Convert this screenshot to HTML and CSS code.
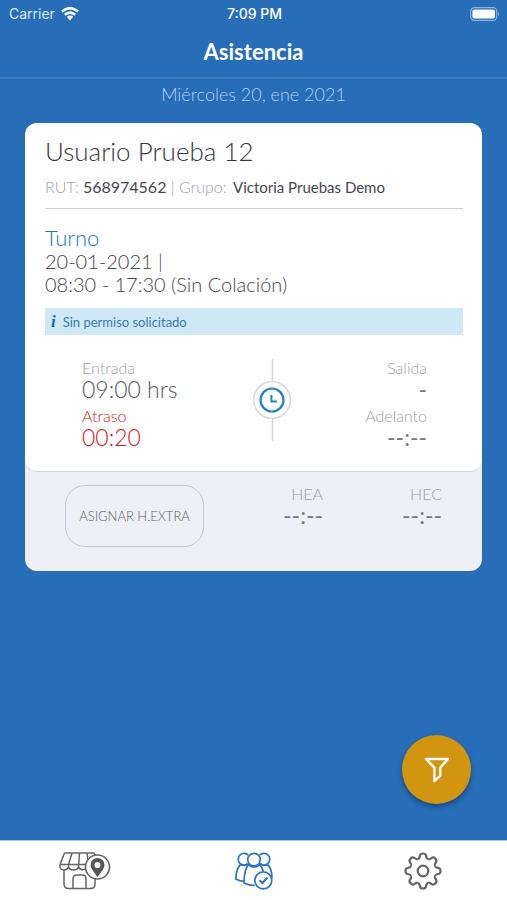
FILE: index.html
```html
<!DOCTYPE html>
<html lang="es">
<head>
<meta charset="utf-8">
<meta name="viewport" content="width=device-width, initial-scale=1">
<title>Asistencia</title>
<link rel="stylesheet" href="styles.css">
</head>
<body>
<div class="app">
  <div class="status">
    <div class="carrier">Carrier
      <svg width="18" height="14" viewBox="0 0 18 14" fill="none" stroke="#fff" stroke-width="2.6"><path d="M1 4.6Q9-2.2 17 4.6M3.8 7.8Q9 3.4 14.2 7.8"/><path d="M5.8 9.8Q9 7.4 12.2 9.8L9 13.4Z" fill="#fff" stroke="none"/></svg>
    </div>
    <div class="time">7:09 PM</div>
    <div class="battery">
      <svg width="30" height="14" viewBox="0 0 30 14"><rect x=".7" y=".7" width="26" height="12.6" rx="3.6" fill="none" stroke="#8fb3dc" stroke-width="1.2"/><rect x="2.4" y="2.4" width="22.6" height="9.2" rx="2" fill="#fff"/><path d="M28 4.6Q30 7 28 9.4Z" fill="#8fb3dc"/></svg>
    </div>
  </div>
  <header class="header"><h1>Asistencia</h1></header>
  <main class="main">
    <p class="date">Miércoles 20, ene 2021</p>
    <article class="card">
      <section class="sheet">
        <h2 class="name">Usuario Prueba 12</h2>
        <p class="meta"><span>RUT:</span> <b>568974562</b> <span>| Grupo:</span> <b class="group">Victoria Pruebas Demo</b></p>
        <div class="shift">
          <h3>Turno</h3>
          <p>20-01-2021 |</p>
          <p>08:30 - 17:30 (Sin Colación)</p>
        </div>
        <div class="notice"><i>i</i>Sin permiso solicitado</div>
        <div class="times">
          <dl>
            <dt>Entrada</dt><dd>09:00 hrs</dd>
            <dt class="late">Atraso</dt><dd class="late">00:20</dd>
          </dl>
          <svg class="clock" width="38" height="82" viewBox="0 0 38 82" fill="none"><path d="M19.5 0V82" stroke="#d2d3d5" stroke-width="1.5"/><circle cx="19" cy="41" r="18.3" fill="#fff" stroke="#d2d3d5" stroke-width="1.3"/><circle cx="19" cy="41" r="11.5" stroke="#2583bd" stroke-width="2.2"/><path d="M18.4 36V42.6H24" stroke="#2583bd" stroke-width="2"/></svg>
          <dl class="right">
            <dt>Salida</dt><dd class="dash">-</dd>
            <dt>Adelanto</dt><dd class="dash">--:--</dd>
          </dl>
        </div>
      </section>
      <section class="extra">
        <button class="assign" type="button">ASIGNAR H.EXTRA</button>
        <dl class="right"><dt>HEA</dt><dd class="dash">--:--</dd></dl>
        <dl class="right"><dt>HEC</dt><dd class="dash">--:--</dd></dl>
      </section>
    </article>
    <button class="filter" type="button" aria-label="Filtrar">
      <svg width="26" height="28" viewBox="0 0 26 28" fill="none" stroke="#fff" stroke-width="2.4" stroke-linejoin="round"><path d="M2 3H24L16.3 11.6V19.6L10.4 25.2V11.6Z"/></svg>
    </button>
  </main>
  <nav class="tabs">
    <a href="#sucursales" aria-label="Sucursales">
      <svg width="52" height="40" viewBox="0 0 52 40" fill="none" stroke="#656565" stroke-width="1.5" stroke-linejoin="round"><path d="M5.5 2H35L38 8M5.5 2L1 13.5V15.5C1 20 8.5 20 9.5 15.5C10.5 20.2 18.5 20.2 19.5 15.5C20.5 20 26 19.5 27.5 16.5M1.2 13.5H27M13 2L9.5 13.5V15.5M20.5 2L19.5 15.5M28 2L29 9M5 19V33Q5 37.5 9.5 37.5H31.5Q36 37.5 36 33V28M14 37.5V28Q14 24 18 24H23Q27 24 27 28V37.5"/><circle cx="38.5" cy="16" r="12" fill="#fff" stroke-width="1.6"/><path d="M38.5 25C35 19.5 32.3 17.5 32.3 14A6.2 6.2 0 0 1 44.7 14C44.7 17.5 42 19.5 38.5 25Z" fill="#555" stroke="#555"/><circle cx="38.5" cy="14" r="3" fill="#fff" stroke="none"/></svg>
    </a>
    <a href="#asistencia" aria-label="Asistencia" aria-current="page">
      <svg width="38" height="38" viewBox="0 0 38 38" fill="none" stroke="#2c74be" stroke-width="1.7"><path d="M13.2 3.2A5.8 5.8 0 1 0 12.8 11.6M24.8 3.2A5.8 5.8 0 1 1 25.2 11.6"/><circle cx="19" cy="7.6" r="6.3"/><path d="M6 12C2.500 15 .9 20 .9 27Q4 29.300 9 29.300M32 12C35.500 15 37 20 37 26M5.500 12.300C8 14 11 13.500 12.500 11.600M32.500 12.300C30 14 27 13.500 25.500 11.600M14 12C10.500 15.500 9 22 9 31Q14 33.500 20 33.500M24 12C26.500 14.500 28 17.500 28.600 20.500M13.500 12.500C16 15.800 22 15.800 24.500 12.500"/><circle cx="28.3" cy="28.3" r="8.500" fill="#fff"/><path d="M24.500 28.200L27.500 31L32.500 25.500" stroke-width="2"/></svg>
    </a>
    <a href="#ajustes" aria-label="Ajustes">
      <svg width="38" height="38" viewBox="-19 -19 38 38" fill="none" stroke="#656565" stroke-width="2.200"><defs><path id="tooth" d="M-5.200-12.500C-3.900-12-3.400-13.600-3-15.500C-2.700-17-1.700-17.500 0-17.500C1.700-17.500 2.700-17 3-15.500C3.400-13.600 3.900-12 5.200-12.500"/></defs><use href="#tooth"/><use href="#tooth" transform="rotate(45)"/><use href="#tooth" transform="rotate(90)"/><use href="#tooth" transform="rotate(135)"/><use href="#tooth" transform="rotate(180)"/><use href="#tooth" transform="rotate(225)"/><use href="#tooth" transform="rotate(270)"/><use href="#tooth" transform="rotate(315)"/><circle r="5.300"/></svg>
    </a>
  </nav>
</div>
</body>
</html>
```
FILE: styles.css
```css
* { box-sizing: border-box; }
body, h1, h2, h3, p, dl, dd { margin: 0; }
h1, h2, h3, b { font-weight: inherit; }
body {
  background: #276db7;
  color: #45464c;
  font-family: Lato, "Open Sans", sans-serif;
  font-weight: 300;
}
button { font: inherit; padding: 0; cursor: pointer; }
.app { min-height: 100vh; display: flex; flex-direction: column; }

.status {
  display: grid;
  grid-template-columns: 1fr auto 1fr;
  align-items: center;
  height: 27px;
  padding: 0 7px 0 9px;
  color: #fff;
  font: 500 14px/16px Inter, sans-serif;
}
.carrier { display: flex; align-items: center; gap: 6px; font-weight: 400; color: #dce9f7; }
.battery { display: flex; justify-content: flex-end; }
.battery svg { display: block; }

.header {
  height: 52px;
  border-bottom: 2px solid #3d7cc0;
  text-align: center;
  color: #fff;
}
.header h1 { font-size: 22px; line-height: 50px; font-weight: 700; }

.main { flex: 1; position: relative; padding: 0 25px; }
.date { color: #b3d2f2; font-size: 18px; line-height: 30px; text-align: center; }

.card {
  margin-top: 14px;
  border-radius: 12px;
  background: #eff0f5;
  overflow: hidden;
}
.sheet {
  height: 349px;
  padding: 12px 19px 0 20px;
  border-bottom: 1px solid #d3d4d8;
  border-radius: 12px;
  background: #fff;
}
.name { font-size: 26px; line-height: 32px; color: #37383d; }
.meta {
  padding: 10px 0 11px;
  border-bottom: 1px solid #cfd0d2;
  font-size: 16px;
  line-height: 20px;
  white-space: nowrap;
}
.meta span { color: #a2a3a6; }
.meta b { font-weight: 400; }
.meta .group { margin-left: 2px; font-size: 15px; }
.shift { padding: 17px 0 12px; font-size: 20px; line-height: 23px; }
.shift h3 { font-size: 22px; line-height: 24px; color: #1e75c4; }
.notice {
  display: flex;
  align-items: center;
  gap: 7px;
  height: 27px;
  padding-left: 6px;
  background: #cee8f5;
  color: #3d78b4;
  font-size: 13px;
  font-weight: 400;
}
.notice i { font: italic 700 17px/20px "Liberation Serif", serif; color: #1e62a6; }
.times { display: flex; justify-content: space-between; padding: 24px 36px 0 37px; }
.times dl { flex: 0 1 136px; }
.times dl:first-child { flex-basis: 172px; }
dt { color: #9fa0a4; font-size: 16px; line-height: 18px; }
dd { color: #56575b; font-size: 23px; line-height: 25px; padding-bottom: 5px; }
.right { text-align: right; }
.late { color: #cf1a20; }
.clock { display: block; flex: none; }
.dash { font-weight: 400; color: #77787b; }

.extra { display: flex; padding: 13px 40px 24px; }
.assign {
  width: 139px;
  height: 62px;
  border: 1px solid #c5c8d4;
  border-radius: 20px;
  background: transparent;
  color: #5c5c62;
  font-size: 13px;
}
.extra dl { flex: 1; }

.filter {
  position: absolute;
  right: 36px;
  bottom: 36px;
  display: grid;
  place-items: center;
  width: 69px;
  height: 69px;
  border: 0;
  border-radius: 50%;
  background: #d1950f;
  box-shadow: 0 3px 5px rgba(0, 20, 60, .4);
}

.tabs {
  display: grid;
  grid-template-columns: repeat(3, 1fr);
  height: 60px;
  border-top: 1px solid #a9c4e2;
  background: #fff;
}
.tabs a { display: grid; place-items: center; }
```
